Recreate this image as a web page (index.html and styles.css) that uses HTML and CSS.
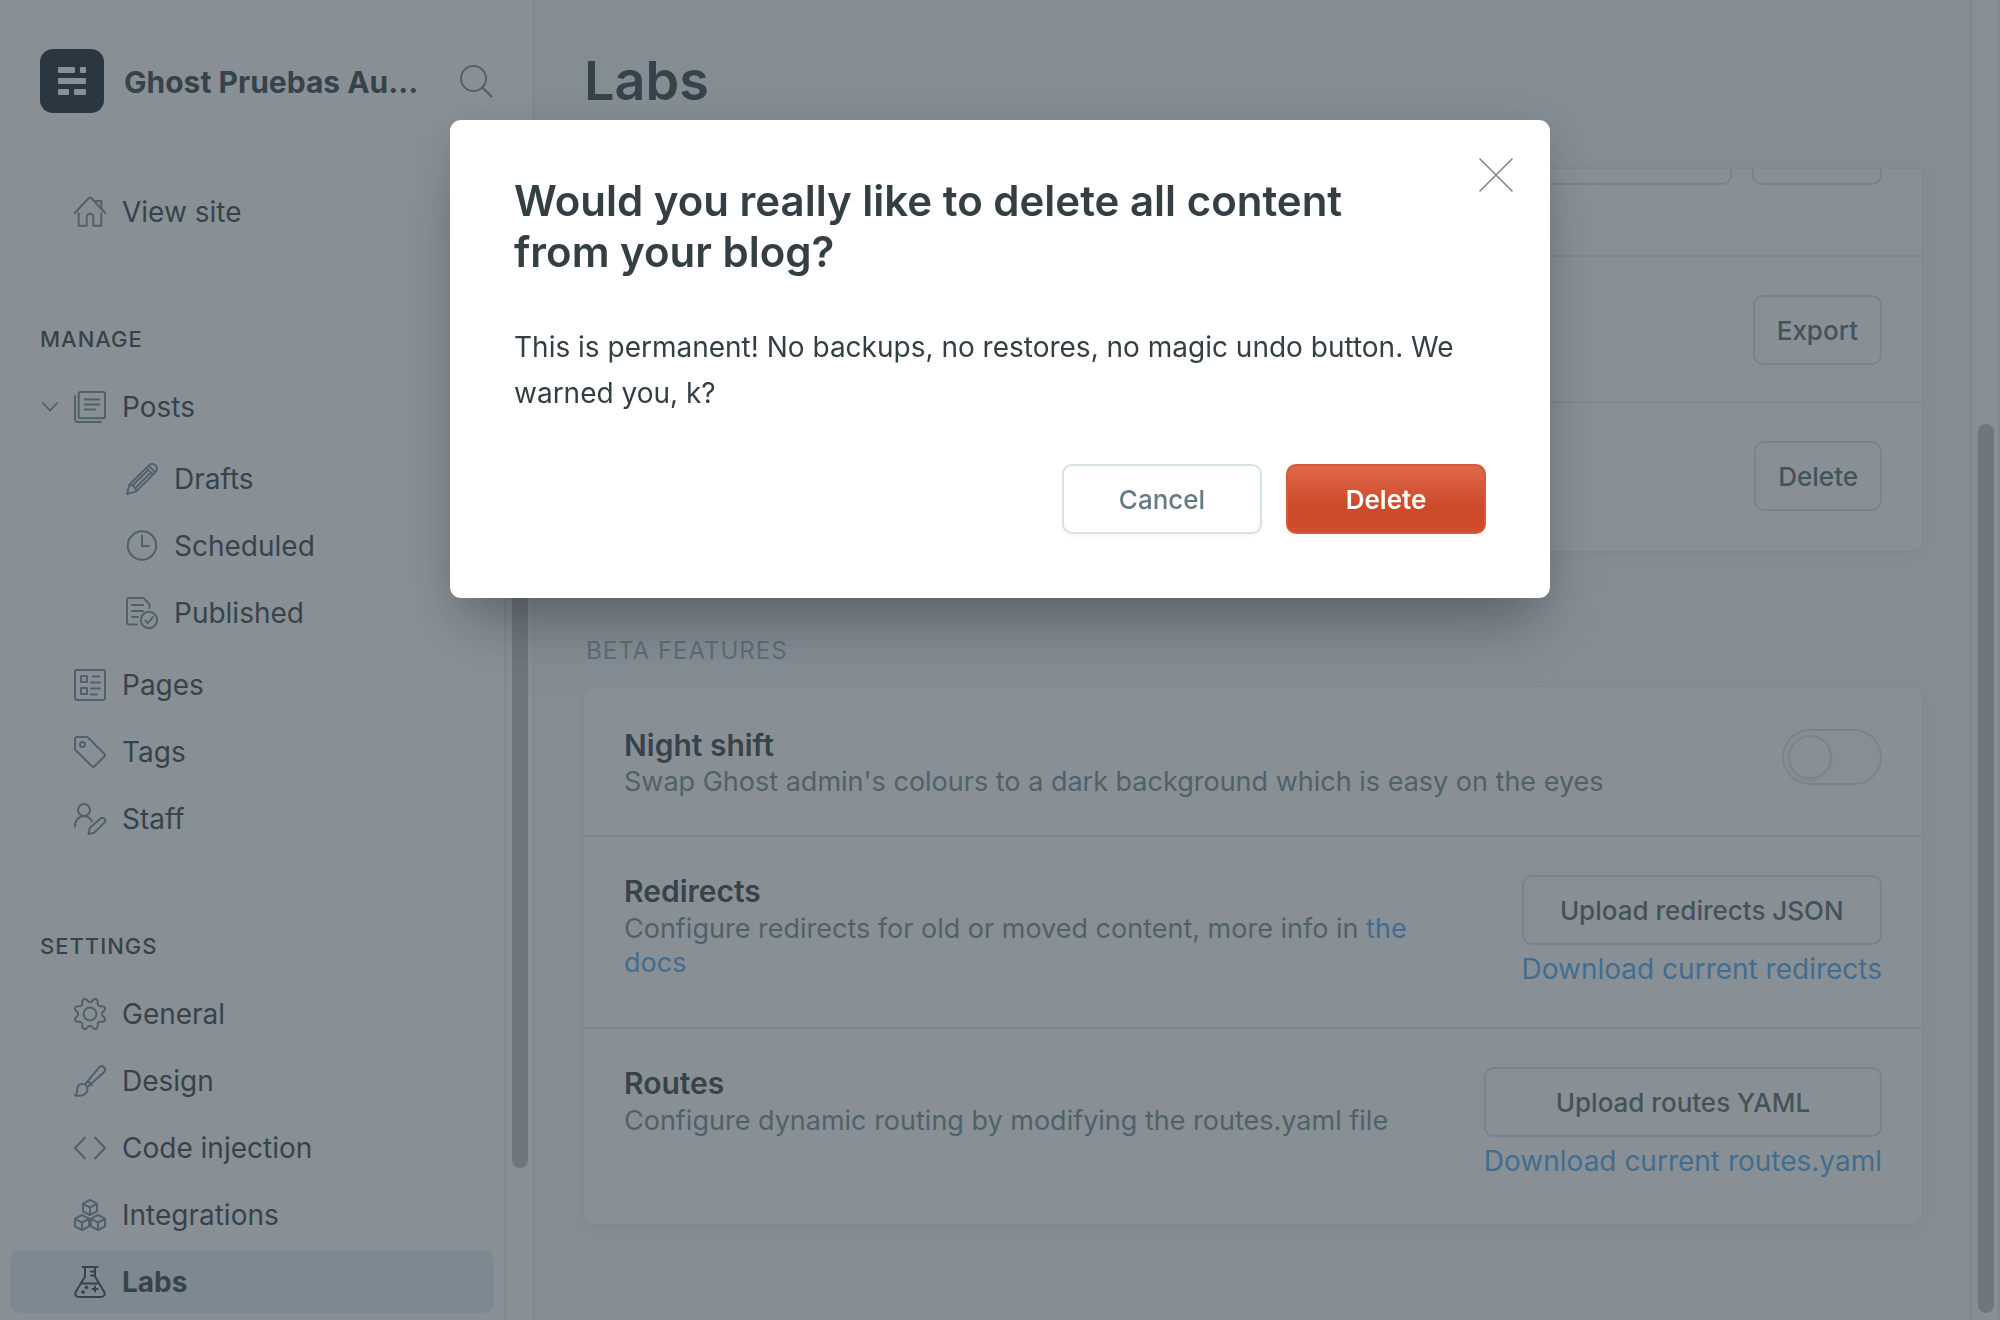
FILE: index.html
```html
<!DOCTYPE html>
<html lang="en">
<head>
<meta charset="utf-8">
<title>Labs - Ghost Pruebas</title>
<meta name="viewport" content="width=device-width, initial-scale=1">
<link rel="stylesheet" href="styles.css">
</head>
<body>
<div class="app">
  <aside class="sidebar">
    <header class="site-header">
      <svg class="site-logo" viewBox="0 0 64 64" aria-hidden="true">
        <rect width="64" height="64" rx="13" fill="#15212a"/>
        <g fill="#fff">
          <rect x="18" y="18" width="17" height="6" rx="1"/><rect x="40" y="18" width="6" height="6" rx="1"/>
          <rect x="18" y="29" width="28" height="6" rx="1"/>
          <rect x="18" y="40" width="11" height="6" rx="1"/><rect x="34" y="40" width="12" height="6" rx="1"/>
        </g>
      </svg>
      <span class="site-name">Ghost Pruebas Au...</span>
      <button class="search-button" type="button" aria-label="Search">
        <svg class="icon" viewBox="0 0 32 32"><circle cx="13.500" cy="13.500" r="12.500"/><path d="M22.300 22.300 31.500 31.500"/></svg>
      </button>
    </header>

    <div class="sidebar-body">
      <nav class="nav" aria-label="Main">
        <ul class="nav-list">
          <li><a class="nav-item" href="#site">
            <svg class="icon" viewBox="0 0 32 32"><path d="M.8 17 14.600 2.200a2 2 0 0 1 2.800 0L31.200 17M4.700 17.500v12.200h8V21a3 3 0 0 1 6.600 0v8.700h8V17.500M20.500 5h6.800v7.500"/></svg>
            View site</a></li>
        </ul>

        <h2 class="nav-heading">Manage</h2>
        <ul class="nav-list">
          <li>
            <a class="nav-item nav-item-parent" href="#posts">
              <svg class="icon chevron" viewBox="0 0 18 12"><path d="M1 1.500 9 10l8-8.500"/></svg>
              <svg class="icon" viewBox="0 0 32 32"><rect x="4.700" y="1" width="26.300" height="26.300" rx="2"/><path d="M1 5.300v23.200A2.500 2.500 0 0 0 3.500 31H27M10.500 8.500h15M10.500 13.500h15M10.500 18.500h11"/></svg>
              Posts</a>
            <ul class="nav-list nav-sub">
              <li><a class="nav-item" href="#drafts">
                <svg class="icon" viewBox="0 0 32 32"><path d="M3.500 21.500 22.800 2.400a4.700 4.700 0 0 1 6.700 6.700L10.300 28.400 1 31zM20.300 4.900l6.700 6.700M22.600 2.600l6.700 6.700M3.500 21.500l3.200 1 2.600 2.600 1 3.300M6.700 22.500 21.800 7.300M9.300 25.100 24.800 9.600"/></svg>
                Drafts</a></li>
              <li><a class="nav-item" href="#scheduled">
                <svg class="icon" viewBox="0 0 32 32"><circle cx="16" cy="15.500" r="14.200"/><path d="M16 5.500V16h7"/></svg>
                Scheduled</a></li>
              <li><a class="nav-item" href="#published">
                <svg class="icon" viewBox="0 0 32 32"><path d="M11 27.500H3A2 2 0 0 1 1 25.500V3a2 2 0 0 1 2-2h14.500L23.500 7.200V11M6 8h11M6 14h11M6 20h6"/><circle cx="23" cy="23" r="8.200"/><path d="m19.200 23.500 2.700 2.700 5-6"/></svg>
                Published</a></li>
            </ul>
          </li>
          <li><a class="nav-item" href="#pages">
            <svg class="icon" viewBox="0 0 32 32"><rect x="1" y="1" width="30" height="30" rx="2"/><path d="M7 7h6v6H7zM7 19h6v6H7zM18.500 7.500h7M17 13.500h9M17 19.500h9M17 25.500h6"/></svg>
            Pages</a></li>
          <li><a class="nav-item" href="#tags">
            <svg class="icon" viewBox="0 0 32 32"><path d="M1 3a2 2 0 0 1 2-2h10.500L30.400 18a1.800 1.800 0 0 1 0 2.500L20.500 30.400a1.800 1.800 0 0 1-2.500 0L1 13.500z"/><circle cx="8.500" cy="8.500" r="2.500"/></svg>
            Tags</a></li>
          <li><a class="nav-item" href="#staff">
            <svg class="icon" viewBox="0 0 32 32"><circle cx="10" cy="7" r="6"/><path d="M1 23.500c0-6.500 4-10.200 9-10.200 3.600 0 6.400 1.800 8 5M14.500 31l1.200-6L26.800 15.300a2.900 2.900 0 0 1 4 4.100L20 29.800z"/></svg>
            Staff</a></li>
        </ul>

        <h2 class="nav-heading">Settings</h2>
        <ul class="nav-list">
          <li><a class="nav-item" href="#general">
            <svg class="icon icon-24" viewBox="0 0 24 24"><circle cx="12" cy="12" r="4.800"/><path d="M10.546 2.438a1.957 1.957 0 0 0 2.908 0L14.400 1.400a1.959 1.959 0 0 1 3.410 1.413l-.071 1.400a1.958 1.958 0 0 0 2.051 2.054l1.400-.071a1.959 1.959 0 0 1 1.410 3.410l-1.042.940a1.960 1.960 0 0 0 0 2.909l1.042.940a1.959 1.959 0 0 1-1.413 3.410l-1.400-.071a1.958 1.958 0 0 0-2.056 2.056l.071 1.400A1.959 1.959 0 0 1 14.400 22.600l-.941-1.041a1.959 1.959 0 0 0-2.908 0L9.606 22.600A1.959 1.959 0 0 1 6.200 21.192l.072-1.400a1.958 1.958 0 0 0-2.056-2.056l-1.400.071A1.958 1.958 0 0 1 1.400 14.400l1.041-.940a1.960 1.960 0 0 0 0-2.909L1.400 9.606A1.958 1.958 0 0 1 2.809 6.200l1.400.071a1.958 1.958 0 0 0 2.058-2.060L6.200 2.810A1.959 1.959 0 0 1 9.606 1.400z"/></svg>
            General</a></li>
          <li><a class="nav-item" href="#design">
            <svg class="icon" viewBox="0 0 32 32"><path d="M1 30.500c2-1 2-3 2.200-6 .3-3.800 2.600-5.500 5-5.500 3 0 5.200 2.300 5.200 5.200 0 5-5.400 7.300-12.400 6.300zM11 19.500 25.300 2.200a3.400 3.400 0 0 1 4.900 4.700L13.600 22M14 16l4 4"/></svg>
            Design</a></li>
          <li><a class="nav-item" href="#code">
            <svg class="icon" viewBox="0 0 32 32"><path d="M11 5.500 1 16l10 10.500M21 5.500 31 16 21 26.500"/></svg>
            Code injection</a></li>
          <li><a class="nav-item" href="#integrations">
            <svg class="icon" viewBox="0 0 32 32"><path d="m16 1 7 3.600v7.800L16 16l-7-3.600V4.600zM9 4.900l7 3.600 7-3.600M16 8.500V16M8 16l7 3.600v7.800L8 31l-7-3.600v-7.800zM1 19.900l7 3.600 7-3.600M8 23.500V31M24 16l7 3.600v7.800L24 31l-7-3.600v-7.800zM17 19.900l7 3.600 7-3.600M24 23.500V31"/></svg>
            Integrations</a></li>
          <li><a class="nav-item is-active" href="#labs" aria-current="page">
            <svg class="icon" viewBox="0 0 32 32"><path d="M8.500 1h15M11 1v9.500L2 25.500C.3 28.500 1.800 31 5 31h22c3.200 0 4.700-2.500 3-5.500L21 10.500V1M6.500 17.500h19M17 5.500h4M17 9.500h4M21 20.500v5M18.500 23h5M12.500 20.500v2M11.500 21.500h2M9 25v2M8 26h2"/></svg>
            Labs</a></li>
        </ul>
      </nav>
      <div class="scrollbar sidebar-scrollbar" aria-hidden="true"><div class="scrollbar-thumb"></div></div>
    </div>
  </aside>

  <main class="main">
    <div class="main-column">
      <header class="page-header"><h1 class="page-title">Labs</h1></header>
      <div class="page-scroll">
        <section class="card migration-card" aria-label="Migration options">
          <div class="row row-import">
            <input class="file-input" type="text" readonly aria-label="Import file">
            <button class="button import-button" type="button" aria-label="Import"></button>
          </div>
          <div class="row">
            <div class="row-text"></div>
            <button class="button" type="button">Export</button>
          </div>
          <div class="row">
            <div class="row-text"></div>
            <button class="button" type="button">Delete</button>
          </div>
        </section>

        <h2 class="section-heading">Beta features</h2>
        <section class="card">
          <div class="row">
            <div class="row-text">
              <h3 class="row-title"><label for="night-shift">Night shift</label></h3>
              <p class="row-description">Swap Ghost admin's colours to a dark background which is easy on the eyes</p>
            </div>
            <input class="toggle" type="checkbox" id="night-shift">
          </div>
          <div class="row row-upload">
            <div class="row-text">
              <h3 class="row-title">Redirects</h3>
              <p class="row-description">Configure redirects for old or moved content, more info in <a class="link" href="#docs">the docs</a></p>
            </div>
            <div class="row-actions">
              <button class="button" type="button">Upload redirects JSON</button>
              <a class="link" href="#redirects">Download current redirects</a>
            </div>
          </div>
          <div class="row row-upload">
            <div class="row-text">
              <h3 class="row-title">Routes</h3>
              <p class="row-description">Configure dynamic routing by modifying the routes.yaml file</p>
            </div>
            <div class="row-actions">
              <button class="button" type="button">Upload routes YAML</button>
              <a class="link" href="#routes">Download current routes.yaml</a>
            </div>
          </div>
        </section>
      </div>
    </div>
    <div class="scrollbar main-scrollbar" aria-hidden="true"><div class="scrollbar-thumb"></div></div>
  </main>
</div>

<div class="overlay">
  <div class="modal" role="dialog" aria-modal="true" aria-labelledby="modal-title">
    <header class="modal-header">
      <h2 class="modal-title" id="modal-title">Would you really like to delete all content from your blog?</h2>
      <button class="close-button" type="button" aria-label="Close">
        <svg class="icon" viewBox="0 0 32 32"><path d="M0 0 32 32M32 0 0 32"/></svg>
      </button>
    </header>
    <p class="modal-body">This is permanent! No backups, no restores, no magic undo button. We warned you, k?</p>
    <footer class="modal-footer">
      <button class="button modal-button" type="button">Cancel</button>
      <button class="button modal-button button-red" type="button">Delete</button>
    </footer>
  </div>
</div>
</body>
</html>
```
FILE: styles.css
```css
:root {
  --darkgrey: #343f44;
  --middarkgrey: #54666d;
  --midgrey: #738a94;
  --line: #e3edef;
  --border: #d6e2e6;
  --blue: #52a8ea;
}

*, *::before, *::after { box-sizing: border-box; }

body {
  margin: 0;
  height: 100vh;
  overflow: hidden;
  color: var(--darkgrey);
  font: 400 27px/34px Inter, "Noto Sans", sans-serif;
}

h1, h2, h3, p, ul { margin: 0; padding: 0; }
ul { list-style: none; }
a { text-decoration: none; }
button, input { font: inherit; }

.app { display: flex; height: 100vh; }

.icon {
  flex: none;
  width: 32px;
  height: 32px;
  overflow: visible;
  fill: none;
  stroke: currentColor;
  stroke-width: 2;
  stroke-linecap: round;
  stroke-linejoin: round;
}
.icon-24 { stroke-width: 1.5; }

/* Sidebar */
.sidebar {
  display: flex;
  flex-direction: column;
  flex: none;
  width: 535px;
  border-right: 2px solid var(--line);
  background: #fff;
}
.site-header {
  display: flex;
  flex: none;
  align-items: center;
  padding: 49px 41px 37px 40px;
}
.site-logo { flex: none; width: 64px; height: 64px; }
.site-name {
  flex: 1;
  margin-left: 20px;
  padding-top: 2px;
  font-size: 30px;
  font-weight: 700;
  white-space: nowrap;
}
.search-button, .close-button {
  display: flex;
  padding: 0;
  border: 0;
  background: none;
  color: var(--midgrey);
}

.sidebar-body { display: flex; flex: 1; min-height: 0; }
.nav { flex: 1; overflow: hidden; padding: 30px 10px 0; }
.nav-list { display: flex; flex-direction: column; gap: 4px; }
.nav-item {
  display: flex;
  align-items: center;
  gap: 16px;
  height: 63px;
  padding-left: 64px;
  border-radius: 10px;
  color: var(--darkgrey);
  font-size: 28px;
}
.nav-item .icon { color: var(--midgrey); }
.nav-item-parent { padding-left: 32px; }
.nav-item-parent .chevron { width: 16px; height: 12px; }
.nav-item.is-active { background: var(--line); font-weight: 700; }
.nav-item.is-active .icon { color: var(--darkgrey); }
.nav-sub { padding: 9px 0 5px; }
.nav-sub .nav-item { padding-left: 116px; }
.nav-heading {
  margin: 80px 0 20px 30px;
  font-size: 22px;
  font-weight: 500;
  line-height: 32px;
  letter-spacing: 1px;
  text-transform: uppercase;
}

.scrollbar {
  flex: none;
  width: 29px;
  border-left: 2px solid var(--line);
  background: #fcfcfd;
}
.scrollbar-thumb {
  width: 16px;
  margin-left: 6px;
  border-radius: 8px;
  background: #c1c1c3;
}
.sidebar-scrollbar .scrollbar-thumb { height: 87%; }

/* Main */
.main { display: flex; flex: 1; min-width: 0; background: #f4f7f9; }
.main-column {
  display: flex;
  flex: 1;
  flex-direction: column;
  min-width: 0;
}
.page-header {
  flex: none;
  margin: 0 48px 0 49px;
  padding: 49px 0 54px;
  border-bottom: 2px solid var(--line);
}
.page-title { font-size: 54px; font-weight: 600; line-height: 64px; }
.page-scroll { flex: 1; overflow: hidden; padding: 0 48px 0 49px; }
.main-scrollbar { width: 30px; border-right: 2px solid var(--line); padding-top: 424px; }
.main-scrollbar .scrollbar-thumb { height: calc(100vh - 431px); }

.card {
  border-radius: 10px;
  background: #fff;
  box-shadow: 0 0 2px rgba(0, 0, 0, .08), 0 4px 12px rgba(0, 0, 0, .05);
}
.migration-card { margin-top: -54px; }
.row {
  display: flex;
  align-items: flex-start;
  justify-content: space-between;
  padding: 38px 40px 36px;
  border-bottom: 2px solid var(--line);
}
.row:last-child { border-bottom: 0; padding-bottom: 40px; }
.row-import { gap: 20px; padding: 0 40px 70px; }
.import-button { width: 130px; }
.row-upload { padding: 34px 40px 41px; }
.row-upload:last-child { padding-bottom: 46px; }
.row-upload .row-description { padding-top: 1px; }
.row-text { flex: 1; }
.row-title { font-size: 30px; font-weight: 600; line-height: 40px; }
.row-description { color: var(--midgrey); }
.row-actions {
  display: flex;
  flex-direction: column;
  gap: 7px;
  margin: 4px 0 0 80px;
  font-size: 28px;
}
.link { color: var(--blue); }

.section-heading {
  padding: 83px 2px 19px;
  color: #98a9b1;
  font-size: 24px;
  font-weight: 400;
  letter-spacing: 1px;
  text-transform: uppercase;
}

.button {
  height: 70px;
  padding: 2px 22px 0;
  border: 2px solid var(--border);
  border-radius: 10px;
  background: #fff;
  color: var(--middarkgrey);
  font-size: 26px;
  font-weight: 500;
  white-space: nowrap;
}
.file-input {
  flex: 1;
  min-width: 0;
  height: 70px;
  border: 2px solid var(--border);
  border-radius: 10px;
  background: #fff;
}
.toggle {
  flex: none;
  width: 100px;
  height: 56px;
  margin: 4px 0 0;
  padding: 4px;
  border: 2px solid var(--border);
  border-radius: 28px;
  background: #fcfdfd;
  appearance: none;
}
.toggle::before {
  content: "";
  display: block;
  width: 44px;
  height: 44px;
  border: 2px solid var(--border);
  border-radius: 50%;
  background: #fff;
  box-shadow: 0 2px 4px rgba(0, 0, 0, .08);
}

/* Modal */
.overlay {
  position: fixed;
  inset: 0;
  display: flex;
  align-items: flex-start;
  justify-content: center;
  padding-top: 120px;
  background: rgba(57, 70, 80, .6);
}
.modal {
  width: 1100px;
  max-width: 100%;
  padding: 55px 64px 64px;
  border-radius: 11px;
  background: #fff;
  box-shadow: 0 40px 60px -16px rgba(0, 0, 0, .26), 0 8px 40px rgba(0, 0, 0, .1);
}
.modal-header { display: flex; justify-content: space-between; align-items: flex-start; }
.modal-title { max-width: 880px; font-size: 42px; font-weight: 600; line-height: 51px; }
.close-button { margin: -16px -26px 0 0; color: #808080; }
.close-button .icon { stroke-width: 1.5; }
.modal-body { margin: 47px 0 48px; font-size: 28px; line-height: 46px; }
.modal-footer { display: flex; justify-content: flex-end; gap: 24px; }
.modal-button { width: 200px; color: #667a84; box-shadow: 0 2px 4px rgba(0, 0, 0, .04); }
.button-red {
  border-color: #d8593b;
  background: linear-gradient(#df694b, #cd4a2b 60%, #cd4a2b 90%, #d04f30);
  color: #fff;
  font-weight: 600;
}
```
